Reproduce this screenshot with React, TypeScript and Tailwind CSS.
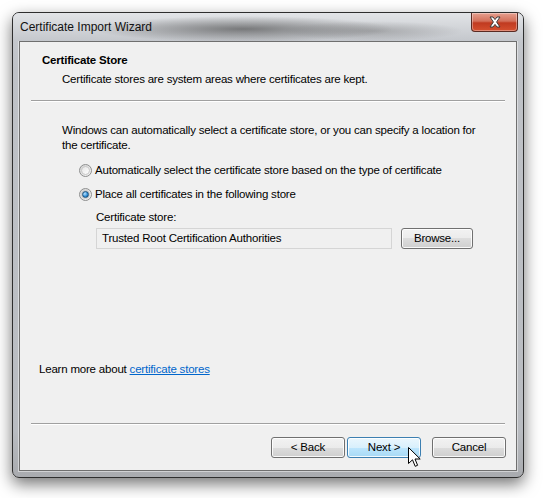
import React from 'react';

const font = { fontFamily: '"Segoe UI", "Liberation Sans", Arial, sans-serif' };

const Radio: React.FC<{ checked?: boolean }> = ({ checked }) => (
  <span className="relative flex h-[13px] w-[13px] items-center justify-center rounded-full border border-[#8e8f8f] bg-[linear-gradient(135deg,#d4d4d4,#f6f6f6)]">
    <span className="h-[9px] w-[9px] rounded-full border border-[#c8c8c8] bg-[linear-gradient(135deg,#e6e6e6,#ffffff)]" />
    {checked && (
      <span className="absolute h-[7px] w-[7px] rounded-full border border-[#1b4e78] bg-[radial-gradient(circle_at_35%_35%,#b9e2ff,#2a8ad4_60%,#0f4f86)]" />
    )}
  </span>
);

const Button: React.FC<{ label: string; hot?: boolean; className?: string }> = ({ label, hot, className = '' }) => (
  <div
    className={`flex h-[21px] items-center justify-center rounded-[3px] border text-[11.5px] tracking-[-0.2px] text-black shadow-[inset_0_0_0_1px_rgba(255,255,255,0.85)] ${
      hot
        ? 'border-[#3c7fb1] bg-[linear-gradient(#eaf6fd_0%,#d9f0fc_50%,#bee6fd_50%,#a7d9f5_100%)]'
        : 'border-[#707070] bg-[linear-gradient(#f2f2f2_0%,#ebebeb_50%,#dddddd_50%,#cfcfcf_100%)]'
    } ${className}`}
  >
    {label}
  </div>
);

const Cursor: React.FC = () => (
  <svg className="absolute left-[395px] top-[434px]" width="13" height="21" viewBox="0 0 13 21">
    <path
      d="M0.5 0.5 L0.5 16.5 L4.5 12.8 L7.2 19.3 L9.6 18.3 L7 12 L12.2 12 Z"
      fill="#ffffff"
      stroke="#000000"
      strokeWidth="1"
      strokeLinejoin="miter"
    />
  </svg>
);

export default function App() {
  return (
    <div className="h-[498px] w-[545px] overflow-hidden bg-white pl-[12px] pt-[12px]" style={font}>
      <div className="relative flex h-[466px] w-[512px] flex-col rounded-[7px] border border-[#2e2e2e] bg-[linear-gradient(#c9ccd1,#bfc2c7_12%,#b9bcc1_90%,#a9abaf)] shadow-[0_6px_16px_rgba(0,0,0,0.55)]">
        {/* title bar */}
        <div className="relative flex h-[28px] items-center rounded-t-[6px] bg-[radial-gradient(ellipse_150px_13px_at_230px_16px,rgba(60,60,60,0.6),transparent),radial-gradient(ellipse_90px_10px_at_360px_18px,rgba(90,90,90,0.35),transparent),linear-gradient(#e2e4e7,#c4c7cc)] pl-[7px]">
          <span className="text-[12px] leading-[15px] text-[#111]">Certificate Import Wizard</span>
          <div className="absolute right-[5px] top-0 flex h-[19px] w-[47px] items-center justify-center rounded-b-[4px] border border-t-0 border-[#5a2a22] bg-[linear-gradient(#e6a090_0%,#d3705a_45%,#c03a20_55%,#d5502f_100%)] shadow-[inset_0_0_0_1px_rgba(255,255,255,0.35)]">
            <svg width="14" height="12" viewBox="0 0 14 12">
              <path
                d="M2 1 L5 1 L7 3.6 L9 1 L12 1 L8.6 6 L12 11 L9 11 L7 8.4 L5 11 L2 11 L5.4 6 Z"
                fill="#ffffff"
                stroke="#3b3b3b"
                strokeWidth="1"
                strokeLinejoin="round"
              />
            </svg>
          </div>
        </div>

        {/* client area */}
        <div className="mx-[6px] flex h-[430px] flex-col border border-[#6f6f6f] bg-[#f0f0f0] text-[11.5px] leading-[15px] tracking-[-0.2px] text-black shadow-[0_0_0_1px_rgba(255,255,255,0.45)]">
          <div className="pl-[22px] pt-[11px]">
            <div className="font-bold">Certificate Store</div>
            <div className="mt-[4px] pl-[20px]">Certificate stores are system areas where certificates are kept.</div>
          </div>
          <div className="mx-[11px] mt-[13px] h-[2px] border-t border-b border-t-[#a0a0a0] border-b-white" />

          <div className="pl-[42px] pt-[21px]">
            <div className="whitespace-nowrap">Windows can automatically select a certificate store, or you can specify a location for</div>
            <div>the certificate.</div>

            <div className="mt-[10px] flex items-center gap-[3px] pl-[17px]">
              <Radio />
              <span>Automatically select the certificate store based on the type of certificate</span>
            </div>
            <div className="mt-[9px] flex items-center gap-[3px] pl-[17px]">
              <Radio checked />
              <span>Place all certificates in the following store</span>
            </div>

            <div className="mt-[8px] pl-[34px]">
              <div>Certificate store:</div>
              <div className="mt-[3px] flex items-center">
                <div className="flex h-[21px] w-[296px] items-center border border-[#d5d5d5] bg-[#f0f0f0] pl-[5px]">
                  Trusted Root Certification Authorities
                </div>
                <Button label="Browse..." className="ml-[9px] w-[72px]" />
              </div>
            </div>
          </div>

          <div className="mt-[113px] pl-[19px]">
            Learn more about <span className="text-[#0066cc] underline">certificate stores</span>
          </div>

          <div className="mx-[11px] mt-[46px] h-[2px] border-t border-b border-t-[#a0a0a0] border-b-white" />
          <div className="mt-[12px] flex justify-end pr-[10px]">
            <Button label="< Back" className="w-[74px]" />
            <Button label="Next >" hot className="ml-[2px] w-[74px]" />
            <Button label="Cancel" className="ml-[11px] w-[74px]" />
          </div>
        </div>
        <Cursor />
      </div>
    </div>
  );
}
